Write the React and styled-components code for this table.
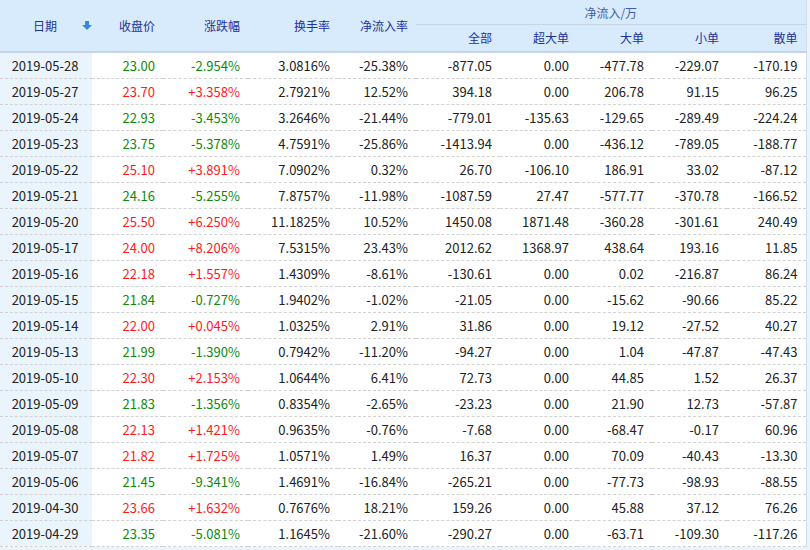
import React from 'react';
import styled, { createGlobalStyle } from 'styled-components';

const rows = [
  ['2019-05-28', '23.00', '-2.954%', '3.0816%', '-25.38%', '-877.05', '0.00', '-477.78', '-229.07', '-170.19'],
  ['2019-05-27', '23.70', '+3.358%', '2.7921%', '12.52%', '394.18', '0.00', '206.78', '91.15', '96.25'],
  ['2019-05-24', '22.93', '-3.453%', '3.2646%', '-21.44%', '-779.01', '-135.63', '-129.65', '-289.49', '-224.24'],
  ['2019-05-23', '23.75', '-5.378%', '4.7591%', '-25.86%', '-1413.94', '0.00', '-436.12', '-789.05', '-188.77'],
  ['2019-05-22', '25.10', '+3.891%', '7.0902%', '0.32%', '26.70', '-106.10', '186.91', '33.02', '-87.12'],
  ['2019-05-21', '24.16', '-5.255%', '7.8757%', '-11.98%', '-1087.59', '27.47', '-577.77', '-370.78', '-166.52'],
  ['2019-05-20', '25.50', '+6.250%', '11.1825%', '10.52%', '1450.08', '1871.48', '-360.28', '-301.61', '240.49'],
  ['2019-05-17', '24.00', '+8.206%', '7.5315%', '23.43%', '2012.62', '1368.97', '438.64', '193.16', '11.85'],
  ['2019-05-16', '22.18', '+1.557%', '1.4309%', '-8.61%', '-130.61', '0.00', '0.02', '-216.87', '86.24'],
  ['2019-05-15', '21.84', '-0.727%', '1.9402%', '-1.02%', '-21.05', '0.00', '-15.62', '-90.66', '85.22'],
  ['2019-05-14', '22.00', '+0.045%', '1.0325%', '2.91%', '31.86', '0.00', '19.12', '-27.52', '40.27'],
  ['2019-05-13', '21.99', '-1.390%', '0.7942%', '-11.20%', '-94.27', '0.00', '1.04', '-47.87', '-47.43'],
  ['2019-05-10', '22.30', '+2.153%', '1.0644%', '6.41%', '72.73', '0.00', '44.85', '1.52', '26.37'],
  ['2019-05-09', '21.83', '-1.356%', '0.8354%', '-2.65%', '-23.23', '0.00', '21.90', '12.73', '-57.87'],
  ['2019-05-08', '22.13', '+1.421%', '0.9635%', '-0.76%', '-7.68', '0.00', '-68.47', '-0.17', '60.96'],
  ['2019-05-07', '21.82', '+1.725%', '1.0571%', '1.49%', '16.37', '0.00', '70.09', '-40.43', '-13.30'],
  ['2019-05-06', '21.45', '-9.341%', '1.4691%', '-16.84%', '-265.21', '0.00', '-77.73', '-98.93', '-88.55'],
  ['2019-04-30', '23.66', '+1.632%', '0.7676%', '18.21%', '159.26', '0.00', '45.88', '37.12', '76.26'],
  ['2019-04-29', '23.35', '-5.081%', '1.1645%', '-21.60%', '-290.27', '0.00', '-63.71', '-109.30', '-117.26'],
];

const widths = [92, 71, 85, 90, 78, 84, 77, 75, 75, 79];

const GlobalStyle = createGlobalStyle`
  body {
    margin: 0;
    background: #eaf4fd;
    font-family: "Noto Sans CJK SC", "Microsoft YaHei", sans-serif;
  }
`;

const Table = styled.table`
  width: 806px;
  border-collapse: collapse;
  table-layout: fixed;
  background: #fff;
  border-right: 1px solid #d3deea;
`;

const HeadCell = styled.th`
  background: #d7ebfc;
  color: ${p => (p.$group ? '#4a5ca4' : '#25319b')};
  font-size: 12px;
  font-weight: normal;
  text-align: ${p => (p.$center ? 'left' : 'right')};
  padding: 0 ${p => (p.$center ? '0' : '8px')} 0 0;
  height: ${p => (p.$sub ? '26px' : '24px')};
  line-height: 1;
  border-bottom: ${p => (p.$low ? '2px solid #c8d4e6' : 'none')};
  vertical-align: middle;
`;

const GroupCell = styled(HeadCell)`
  text-align: center;
  padding: 0;
  border-bottom: 1px solid #c8d4e6;
  height: 23px;
  padding-top: 1px;
`;

const DateHead = styled.div`
  display: flex;
  align-items: center;
  gap: 25px;
  padding-left: 33px;
`;

const Row = styled.tr`
  height: 26px;
  border-bottom: 1px dashed #d2d2d2;
`;

const Cell = styled.td`
  font-size: 13px;
  text-align: right;
  padding: 0 8px 0 0;
  color: ${p => p.$color || '#222'};
  white-space: nowrap;
  line-height: 1;
`;

const DateCell = styled(Cell)`
  background: #eaf4fd;
  text-align: center;
  padding: 0 2px 0 0;
`;

function SortArrow() {
  return (
    <svg width="10" height="9" viewBox="0 0 10 9">
      <rect x="3" y="0" width="4" height="4.5" fill="#3d86dc" />
      <path d="M0 4 L10 4 L5 9 Z" fill="#3d86dc" />
    </svg>
  );
}

const colorOf = (s) => (s.startsWith('-') ? '#0c8a0c' : '#ff1a1a');

export default function App() {
  return (
    <>
      <GlobalStyle />
      <Table>
        <colgroup>
          {widths.map((w, i) => <col key={i} style={{ width: w }} />)}
        </colgroup>
        <thead>
          <tr>
            <HeadCell rowSpan={2} $low $center>
              <DateHead>日期<SortArrow /></DateHead>
            </HeadCell>
            <HeadCell rowSpan={2} $low>收盘价</HeadCell>
            <HeadCell rowSpan={2} $low>涨跌幅</HeadCell>
            <HeadCell rowSpan={2} $low>换手率</HeadCell>
            <HeadCell rowSpan={2} $low>净流入率</HeadCell>
            <GroupCell colSpan={5} $group>净流入/万</GroupCell>
          </tr>
          <tr>
            <HeadCell $sub $low>全部</HeadCell>
            <HeadCell $sub $low>超大单</HeadCell>
            <HeadCell $sub $low>大单</HeadCell>
            <HeadCell $sub $low>小单</HeadCell>
            <HeadCell $sub $low>散单</HeadCell>
          </tr>
        </thead>
        <tbody>
          {rows.map((r) => (
            <Row key={r[0]}>
              <DateCell>{r[0]}</DateCell>
              <Cell $color={colorOf(r[2])}>{r[1]}</Cell>
              <Cell $color={colorOf(r[2])}>{r[2]}</Cell>
              {r.slice(3).map((v, i) => <Cell key={i}>{v}</Cell>)}
            </Row>
          ))}
        </tbody>
      </Table>
    </>
  );
}
